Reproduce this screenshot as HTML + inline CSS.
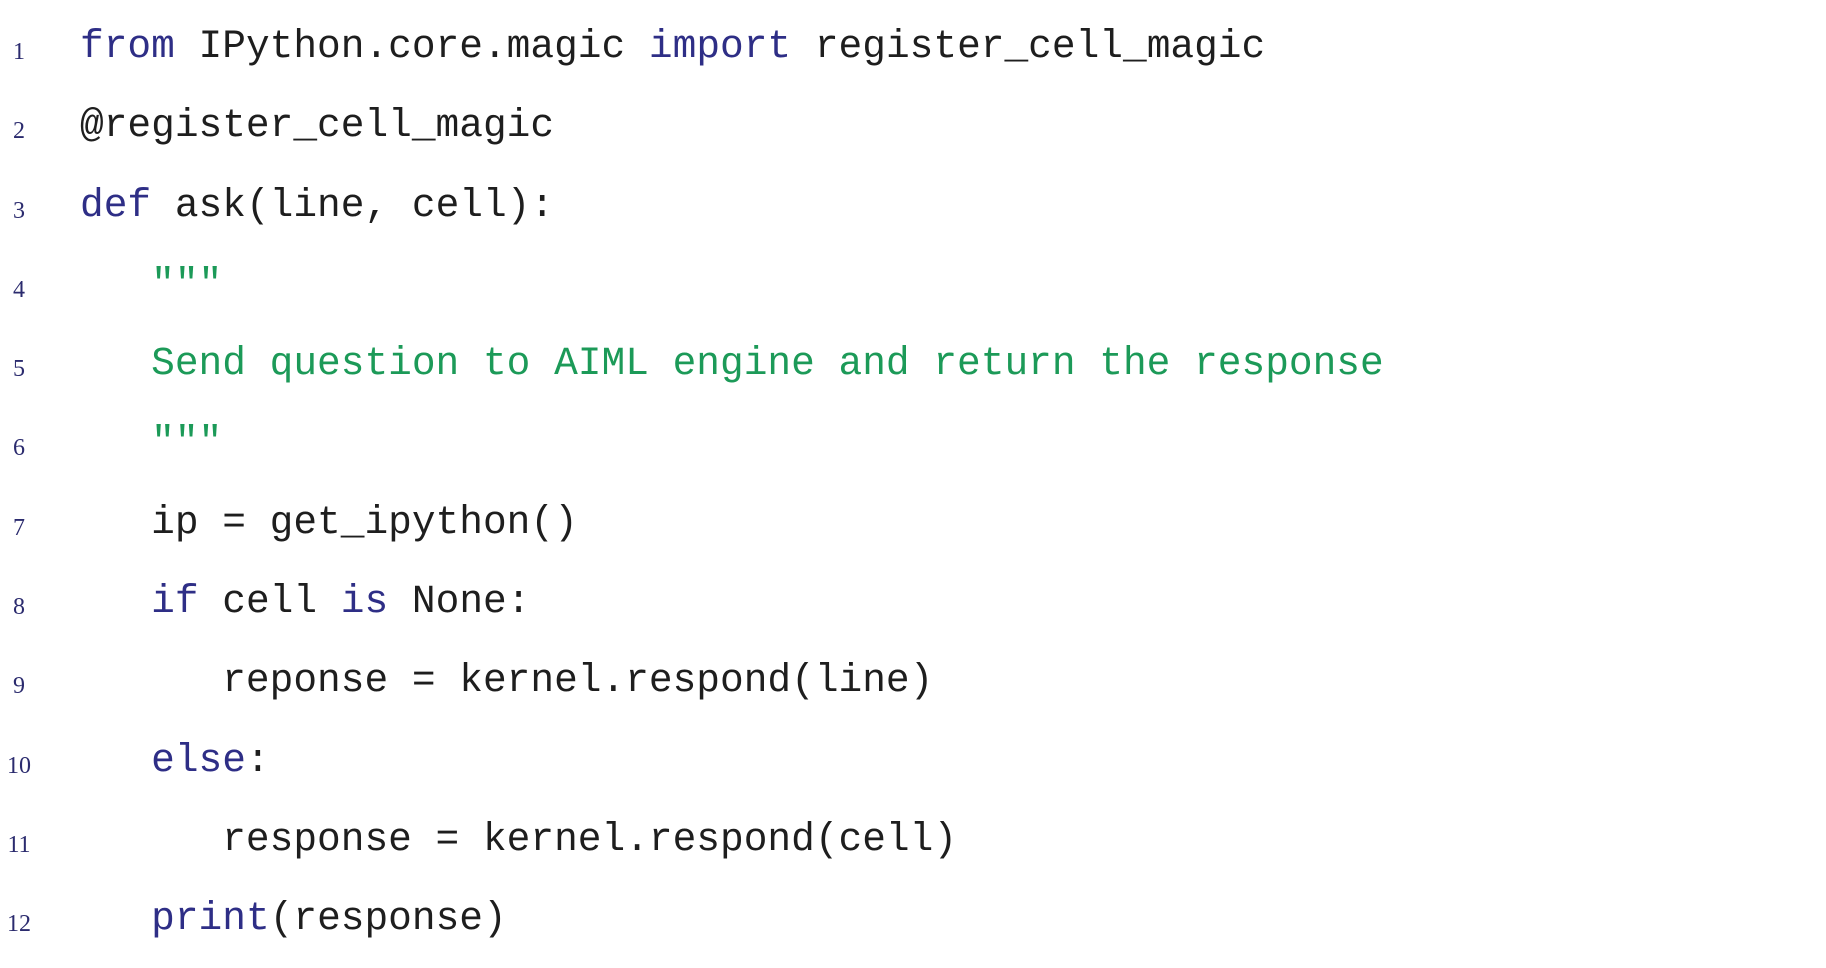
<!DOCTYPE html>
<html><head><meta charset="utf-8"><style>
html,body{margin:0;padding:0;background:#fff;width:1826px;height:968px;overflow:hidden}
.l{position:absolute;left:0;height:80px;width:1826px}
.n{position:absolute;left:4px;width:30px;text-align:center;font-family:"Liberation Serif",serif;font-size:24px;color:#2b2b6e;bottom:-8px}
.c{position:absolute;left:80px;bottom:-8px;font-family:"Liberation Mono",monospace;font-size:39.5px;color:#1e1e1e;white-space:pre;line-height:1}
.k{color:#2e2e86}.g{color:#1c9a58}
</style></head><body>
<div class="l" style="top:-22px"><span class="n">1</span><span class="c"><span class="k">from</span> IPython.core.magic <span class="k">import</span> register_cell_magic</span></div>
<div class="l" style="top:57px"><span class="n">2</span><span class="c">@register_cell_magic</span></div>
<div class="l" style="top:137px"><span class="n">3</span><span class="c"><span class="k">def</span> ask(line, cell):</span></div>
<div class="l" style="top:216px"><span class="n">4</span><span class="c g">   """</span></div>
<div class="l" style="top:295px"><span class="n">5</span><span class="c g">   Send question to AIML engine and return the response</span></div>
<div class="l" style="top:374px"><span class="n">6</span><span class="c g">   """</span></div>
<div class="l" style="top:454px"><span class="n">7</span><span class="c">   ip = get_ipython()</span></div>
<div class="l" style="top:533px"><span class="n">8</span><span class="c">   <span class="k">if</span> cell <span class="k">is</span> None:</span></div>
<div class="l" style="top:612px"><span class="n">9</span><span class="c">      reponse = kernel.respond(line)</span></div>
<div class="l" style="top:692px"><span class="n">10</span><span class="c">   <span class="k">else</span>:</span></div>
<div class="l" style="top:771px"><span class="n">11</span><span class="c">      response = kernel.respond(cell)</span></div>
<div class="l" style="top:850px"><span class="n">12</span><span class="c">   <span class="k">print</span>(response)</span></div>
</body></html>
